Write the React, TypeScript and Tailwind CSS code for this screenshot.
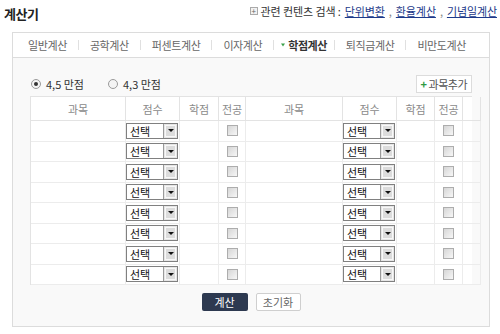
import { Fragment } from "react";

const tabs = ["일반계산", "공학계산", "퍼센트계산", "이자계산", "학점계산", "퇴직금계산", "비만도계산"];
const activeTab = "학점계산";
const headers = ["과목", "점수", "학점", "전공", "과목", "점수", "학점", "전공", ""];
const rows = Array.from({ length: 8 }, (_, i) => i);

function GradeSelect() {
  return (
    <div className="flex h-[16px] w-[52px] border border-[#808080] bg-white">
      <span className="pl-[3px] text-[11px] leading-[14px] text-[#111]">선택</span>
      <div className="ml-auto flex w-[14px] items-center justify-center border-l border-[#9a9a9a] bg-[#e6e6e6]">
        <div className="flex h-[12px] w-[11px] items-center justify-center border border-[#f8f8f8] bg-[#dcdcdc]">
          <svg width="6" height="3" viewBox="0 0 6 3">
            <path d="M0 0h6L3 3z" fill="#111" />
          </svg>
        </div>
      </div>
    </div>
  );
}

function MajorCheck() {
  return <div className="h-[11px] w-[11px] border border-[#adadad] bg-linear-to-br from-[#d6d6d6] to-[#f7f7f7]" />;
}

function Radio({ checked }: { checked?: boolean }) {
  return (
    <div className="flex h-[10px] w-[10px] items-center justify-center rounded-full border border-[#9a9a9a] bg-[#f4f4f4]">
      {checked && <div className="h-[4px] w-[4px] rounded-full bg-[#333]" />}
    </div>
  );
}

export default function App() {
  return (
    <div className="h-[334px] w-[500px] overflow-hidden bg-white font-['Noto_Sans_CJK_KR','Noto_Sans',sans-serif] text-[#333]">
      {/* header */}
      <div className="flex h-[32px] items-start justify-between pl-[4px] pr-[3px]">
        <h1 className="mt-[6px] text-[13px] font-bold leading-[16px] tracking-[-0.5px] text-[#222]">계산기</h1>
        <div className="mt-[4px] flex items-center text-[11px] leading-[14px] tracking-[-0.1px]">
          <span className="mr-[3px] flex h-[8px] w-[8px] items-center justify-center border border-[#aaa] bg-[#f2f2f2] text-[8px] leading-none text-[#666]">
            +
          </span>
          <span className="text-[#333]">관련 컨텐츠 검색 :</span>
          <a className="ml-[4px] text-[#1d3a8a] underline">단위변환</a>
          <span className="px-[4px] text-[#888]">,</span>
          <a className="text-[#1d3a8a] underline">환율계산</a>
          <span className="px-[4px] text-[#888]">,</span>
          <a className="text-[#1d3a8a] underline">기념일계산</a>
        </div>
      </div>

      {/* box */}
      <div className="ml-[12px] flex h-[295px] w-[478px] flex-col border border-[#dcdcdc]">
        {/* tabs */}
        <nav className="flex h-[25px] shrink-0 items-center border-b border-[#dcdcdc] bg-white pl-[4px]">
          {tabs.map((t, i) => (
            <Fragment key={t}>
              {i > 0 && <span className="h-[10px] w-px bg-[#e0e0e0]" />}
              {t === activeTab ? (
                <span className="flex items-center gap-[3px] px-[7px] text-[11px] font-bold leading-[14px] tracking-[-0.5px] text-[#333]">
                  <svg width="4" height="4" viewBox="0 0 4 4">
                    <path d="M0 0.5h4L2 3.5z" fill="#3aa14a" />
                  </svg>
                  {t}
                </span>
              ) : (
                <span className="px-[11px] text-[11px] leading-[14px] tracking-[-0.4px] text-[#666]">{t}</span>
              )}
            </Fragment>
          ))}
        </nav>

        {/* content */}
        <div className="flex-1 bg-[#f9f9f9] px-[17px] pt-[17px]">
          <div className="flex h-[18px] items-center justify-between">
            <div className="flex items-center pl-[1px] text-[11px] leading-[14px] text-[#333]">
              <Radio checked />
              <span className="ml-[5px]">4,5 만점</span>
              <span className="ml-[24px]">
                <Radio />
              </span>
              <span className="ml-[5px]">4,3 만점</span>
            </div>
            <button className="flex h-[18px] items-center gap-[2px] border border-[#dcdcdc] bg-white px-[4px] text-[11px] leading-[14px] tracking-[-0.5px] text-[#555]">
              <span className="text-[11px] font-bold leading-none text-[#2f9a3f]">+</span>
              과목추가
            </button>
          </div>

          {/* table */}
          <div className="mt-[3px] grid grid-cols-[95px_54px_39px_27px_97px_54px_38px_28px_18px] border-l border-t border-[#e3e3e3] bg-white">
            {headers.map((h, i) => (
              <div
                key={"h" + i}
                className="flex h-[24px] items-center justify-center border-b border-r border-[#e3e3e3] text-[11px] leading-[14px] text-[#8a8a8a]"
              >
                {h}
              </div>
            ))}
            {rows.map((r) => (
              <Fragment key={r}>
                <div className="h-[20.5px] border-b border-r border-[#ececec]" />
                <div className="flex h-[20.5px] items-center border-b border-r border-[#ececec]">
                  <GradeSelect />
                </div>
                <div className="h-[20.5px] border-b border-r border-[#ececec]" />
                <div className="flex h-[20.5px] items-center justify-center border-b border-r border-[#ececec]">
                  <MajorCheck />
                </div>
                <div className="h-[20.5px] border-b border-r border-[#ececec]" />
                <div className="flex h-[20.5px] items-center border-b border-r border-[#ececec]">
                  <GradeSelect />
                </div>
                <div className="h-[20.5px] border-b border-r border-[#ececec]" />
                <div className="flex h-[20.5px] items-center justify-center border-b border-r border-[#ececec]">
                  <MajorCheck />
                </div>
                <div className="h-[20.5px] border-b border-r border-[#ececec]" />
              </Fragment>
            ))}
          </div>

          {/* actions */}
          <div className="mt-[8px] flex justify-center gap-[8px]">
            <button className="h-[18px] w-[46px] rounded-[2px] bg-[#2d3950] text-[11px] leading-[14px] text-white">계산</button>
            <button className="h-[18px] w-[45px] rounded-[2px] border border-[#cfcfcf] bg-white text-[11px] leading-[14px] text-[#666]">
              초기화
            </button>
          </div>
        </div>
      </div>
    </div>
  );
}
